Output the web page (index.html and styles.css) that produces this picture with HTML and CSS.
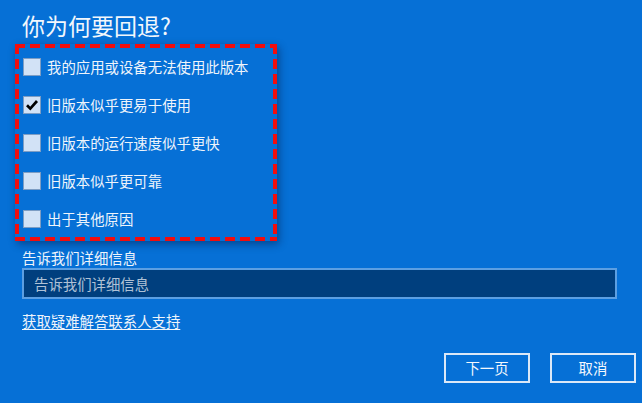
FILE: index.html
```html
<!DOCTYPE html>
<html lang="zh-CN">
<head>
<meta charset="utf-8">
<title>你为何要回退?</title>
<link rel="stylesheet" href="styles.css">
</head>
<body>
<div class="page">
  <h1 class="title">你为何要回退?</h1>
  <div class="reasons">
    <label class="reason"><span class="box"></span><span>我的应用或设备无法使用此版本</span></label>
    <label class="reason"><span class="box checked"><svg viewBox="0 0 18 18" width="18" height="18"><path d="M4 9.2 L7.3 12.6 L14 5" fill="none" stroke="#000" stroke-width="2.7" stroke-linecap="butt" stroke-linejoin="miter"/></svg></span><span>旧版本似乎更易于使用</span></label>
    <label class="reason"><span class="box"></span><span>旧版本的运行速度似乎更快</span></label>
    <label class="reason"><span class="box"></span><span>旧版本似乎更可靠</span></label>
    <label class="reason"><span class="box"></span><span>出于其他原因</span></label>
  </div>
  <div class="label">告诉我们详细信息</div>
  <div class="input">告诉我们详细信息</div>
  <a class="link" href="#">获取疑难解答联系人支持</a>
  <div class="actions">
    <button class="btn">下一页</button>
    <button class="btn">取消</button>
  </div>
</div>
</body>
</html>
```
FILE: styles.css
```css
html, body {
  margin: 0;
  padding: 0;
  background: #0670d6;
}
body {
  width: 642px;
  height: 403px;
  overflow: hidden;
  font-family: "Noto Sans CJK SC", "Noto Sans", sans-serif;
  color: #eef4fb;
}
.page {
  padding: 9px 0 0 22px;
  display: flex;
  flex-direction: column;
  align-items: flex-start;
}
.title {
  margin: 0 0 2px 0;
  font-size: 23px;
  line-height: 33px;
  font-weight: 400;
  color: #f2f7fc;
}
.reasons {
  margin-left: -7px;
  width: 262px;
  box-sizing: border-box;
  padding: 4px 4px 3px 8px;
  display: flex;
  flex-direction: column;
  background:
    repeating-linear-gradient(90deg, #f20d0d 0 10px, transparent 10px 15px) left top / 100% 4px no-repeat,
    repeating-linear-gradient(90deg, #f20d0d 0 10px, transparent 10px 15px) left bottom / 100% 4px no-repeat,
    repeating-linear-gradient(180deg, #f20d0d 0 10px, transparent 10px 15px) left top / 4px 100% no-repeat,
    repeating-linear-gradient(180deg, #f20d0d 0 10px, transparent 10px 15px) right top / 4px 100% no-repeat;
  box-shadow: 2px 3px 8px rgba(0, 20, 60, 0.45);
}
.reason {
  height: 38px;
  display: flex;
  align-items: center;
  gap: 6px;
  font-size: 14.4px;
  line-height: 20px;
}
.box {
  width: 18px;
  height: 18px;
  box-sizing: border-box;
  border: 1px solid #7d9dc4;
  background: #d2e2f6;
  display: flex;
  align-items: center;
  justify-content: center;
  flex: none;
}
.box svg {
  display: block;
  margin: -1px;
}
.label {
  margin-top: 7px;
  font-size: 14.4px;
  line-height: 20px;
}
.input {
  width: 595px;
  height: 31px;
  box-sizing: border-box;
  border: 2px solid #5c9fe2;
  background: #003f7e;
  color: #b0c2d6;
  font-size: 14.4px;
  line-height: 27px;
  padding-left: 10px;
}
.link {
  margin-top: 12px;
  font-size: 14.4px;
  line-height: 20px;
  color: #eef4fb;
  text-decoration: underline;
  text-underline-offset: 2px;
}
.actions {
  align-self: stretch;
  display: flex;
  justify-content: flex-end;
  gap: 20px;
  padding-right: 6px;
  margin-top: 22px;
}
.btn {
  width: 86px;
  height: 30px;
  box-sizing: border-box;
  border: 2px solid #dbe8f7;
  background: transparent;
  color: #f4f8fd;
  font-family: "Noto Sans CJK SC", "Noto Sans", sans-serif;
  font-size: 14.4px;
  line-height: 20px;
  padding: 0;
}
```
